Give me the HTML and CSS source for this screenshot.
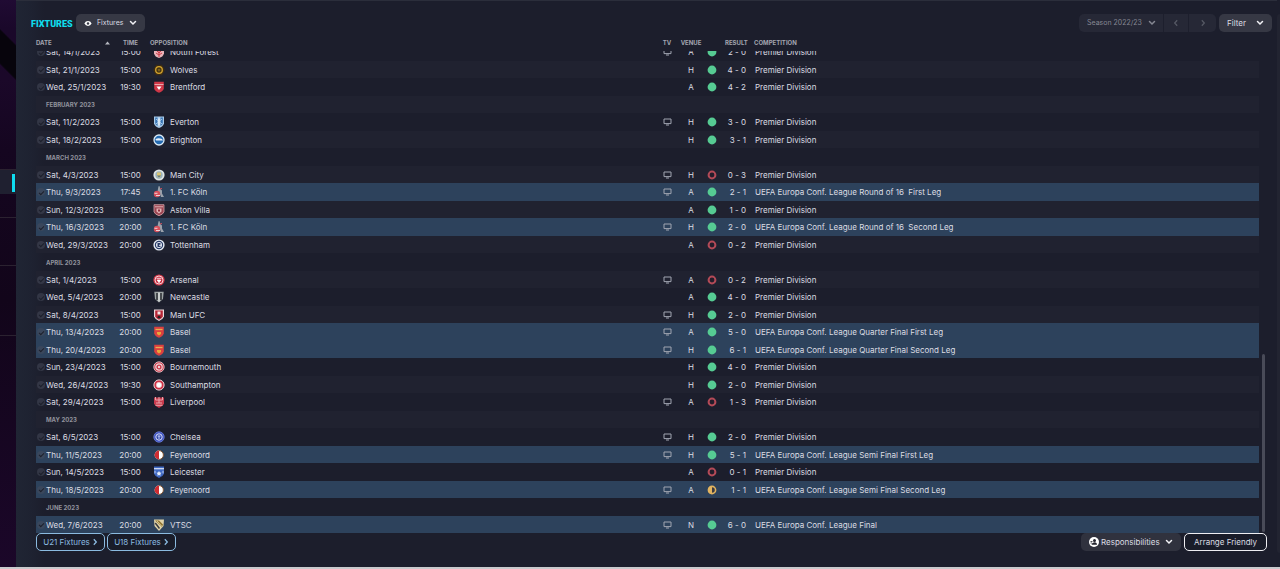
FILE: index.html
```html
<!DOCTYPE html>
<html lang="en">
<head>
<meta charset="utf-8">
<title>Fixtures</title>
<meta name="viewport" content="width=device-width, initial-scale=1">
<link rel="stylesheet" href="styles.css">
</head>
<body>
<svg class="defs" aria-hidden="true">
  <symbol id="tv" viewBox="0 0 9 8"><path d="M1 1h7v4.600H1z" fill="none" stroke="currentColor"/><path d="M3 7h3" stroke="currentColor" fill="none"/></symbol>
  <symbol id="down" viewBox="0 0 8 6"><path d="M1.500 1.500 4 4l2.500-2.500" fill="none" stroke="currentColor" stroke-width="1.500" stroke-linecap="round"/></symbol>
  <symbol id="left" viewBox="0 0 6 8"><path d="M4.200 1.300 1.700 4l2.500 2.700" fill="none" stroke="currentColor" stroke-width="1.300"/></symbol>
  <symbol id="right" viewBox="0 0 6 8"><path d="M1.800 1.300 4.300 4 1.800 6.700" fill="none" stroke="currentColor" stroke-width="1.300"/></symbol>
  <symbol id="win" viewBox="0 0 10 10"><circle cx="5" cy="5" r="4.400" fill="#56cb93"/></symbol>
  <symbol id="loss" viewBox="0 0 10 10"><circle cx="5" cy="5" r="3.400" fill="#241d2b" stroke="#b34a57" stroke-width="2"/></symbol>
  <symbol id="draw" viewBox="0 0 10 10"><circle cx="5" cy="5" r="3.600" fill="#3b3a40" stroke="#e2b460" stroke-width="1.600"/><path d="M5 1a4 4 0 0 0 0 8z" fill="#e2b460"/></symbol>

  <symbol id="forest" viewBox="0 0 12 12"><path d="M1 0h10v7.500Q10 11 6 12 2 11 1 7.500z" fill="#e7b3b8"/><path d="M6 1v10M3 4l3 3 3-3M3 7l3 2 3-2" stroke="#cf3d4b" fill="none"/></symbol>
  <symbol id="wolves" viewBox="0 0 12 12"><path d="M3 .8h6L12 6l-3 5.200H3L0 6z" fill="#3a2b14"/><circle cx="6" cy="6" r="3.300" fill="#473713" stroke="#d4a32d" stroke-width="1.300"/><path d="M4.600 5.200h2.800L6 7.800z" fill="#8e6c22"/></symbol>
  <symbol id="brentford" viewBox="0 0 12 12"><path d="M1.200.800h9.600v7Q10 10.500 6 11.700 2 10.500 1.200 7.800z" fill="#cf3747"/><path d="M1.500 3.500h9" stroke="#e8a7ac"/><path d="M3.500 5.500h5L6 9z" fill="#fff"/></symbol>
  <symbol id="everton" viewBox="0 0 12 12"><path d="M1 .5h10v7Q10 10.500 6 12 2 10.500 1 7.500z" fill="#aacbe9"/><path d="M2.200 1.500h2.300v8.500Q2.500 9 2.200 7zM7.500 1.500h2.300V7Q9.500 9 7.500 10z" fill="#3875b4"/><path d="m3 3 6 5M9 3 3 8" stroke="#aacbe9"/><path d="M5.300 2.500h1.400v7H5.300z" fill="#e8f1f8"/></symbol>
  <symbol id="brighton" viewBox="0 0 12 12"><circle cx="6" cy="6" r="5" fill="#246ab0" stroke="#dbeaf5" stroke-width="1.300"/><path d="M2.500 5q3-1.500 6.500 0l1 1.500H3z" fill="#e7f0fa"/></symbol>
  <symbol id="city" viewBox="0 0 12 12"><circle cx="6" cy="6" r="5.600" fill="#dfe5e4"/><circle cx="6" cy="6" r="3.700" fill="#9ab2bd"/><path d="M4 3.500h4v3.200L6 9 4 6.700z" fill="#d9c472"/><path d="m4 6.500 4 0-2 2z" fill="#597582"/></symbol>
  <symbol id="koln" viewBox="0 0 12 12"><path d="M5.500.3h1.200l.5 2.700L9 4.500v3l2 3.500H8L6.500 7 4.500 5.500z" fill="#9aa1aa"/><circle cx="4" cy="8" r="3.200" fill="#d7505c"/><path d="M1.500 7.300h3M3 9.500h4" stroke="#f0d1d5"/><path d="M7 3 9 2.500" stroke="#d7505c"/></symbol>
  <symbol id="villa" viewBox="0 0 12 12"><path d="M1 .7h10v7.100Q10 10.500 6 11.700 2 10.500 1 7.800z" fill="#9c4552" stroke="#d0a5aa" stroke-width=".8"/><path d="M2 2.800h8" stroke="#e0b4b6"/><path d="M3.500 4.500h5v3L6 9.500 3.500 7.500z" fill="#e0b4b6"/><path d="M5 5.500h2v2H5z" fill="#8c2a3a"/></symbol>
  <symbol id="spurs" viewBox="0 0 12 12"><circle cx="6" cy="6" r="5.600" fill="#e6ebf3"/><circle cx="6" cy="6" r="3.600" fill="#e6ebf3" stroke="#293b67" stroke-width="1.200"/><path d="M4.500 4h3v1.700H6v1L7.500 6.700V8h-3V6.500z" fill="#293b67"/></symbol>
  <symbol id="arsenal" viewBox="0 0 12 12"><circle cx="6" cy="6" r="5.600" fill="#d63b4b"/><circle cx="6" cy="6" r="4" fill="#c72d41" stroke="#f4d3d7"/><path d="M3.500 4.300h5M4.200 6h3.600L6 8.700z" stroke="#fff" fill="#fff" stroke-width=".8"/></symbol>
  <symbol id="newcastle" viewBox="0 0 12 12"><path d="M1.300.8h9.400L10 8 6 11.500 2 8z" fill="#9da3a3"/><path d="M4 2v7M8 2v7" stroke="#171a20" stroke-width="1.300"/><path d="M6 1.500v9" stroke="#e9eceb" stroke-width="1.200"/></symbol>
  <symbol id="united" viewBox="0 0 12 12"><path d="M1 .4h10v7.200Q10 10.500 6 12 2 10.500 1 7.600z" fill="#ead9dc"/><path d="M2.200 1.500h7.600v6Q9 9.500 6 10.700 3 9.500 2.200 7.500z" fill="#b82536"/><path d="M4.500 2.500h3v3h-3z" fill="#f1e5e5"/><path d="M4 8.300 6 6.500l2 1.800L6 9.500z" fill="#222"/></symbol>
  <symbol id="basel" viewBox="0 0 12 12"><path d="M1.200.800h9.600v6.500Q10 10.500 6 11.700 2 10.500 1.200 7.300z" fill="#dc403f"/><path d="M2.500 3.500h7" stroke="#e7b052" stroke-width="1.300"/><path d="M4 6h4v2L6 9.500 4 8z" fill="#e8a73b"/></symbol>
  <symbol id="bournemouth" viewBox="0 0 12 12"><circle cx="6" cy="6" r="5.200" fill="#ca3849" stroke="#f0d6d9" stroke-width=".8"/><circle cx="6" cy="6" r="3.200" fill="none" stroke="#f0d6d9" stroke-width="1.200"/><circle cx="6" cy="6" r="1.200" fill="#f0d6d9"/></symbol>
  <symbol id="southampton" viewBox="0 0 12 12"><circle cx="6" cy="6" r="5.100" fill="#ce3043" stroke="#f0d6d9"/><circle cx="6" cy="6" r="2.700" fill="#fff" stroke="#eec1c6" stroke-width=".7"/></symbol>
  <symbol id="liverpool" viewBox="0 0 12 12"><path d="M1 1.500h10v6.300Q10 10 6 12 2 10 1 7.800z" fill="#c83b4d"/><path d="M2.500 1v3h7V1M6 1v6M3 7h6M2.500 9.300h7" stroke="#e8a5ac" fill="none"/></symbol>
  <symbol id="chelsea" viewBox="0 0 12 12"><circle cx="6" cy="6" r="5.200" fill="#3e52c0" stroke="#6e82dc" stroke-width=".8"/><circle cx="6" cy="6" r="3.200" fill="#3148a9" stroke="#dce0fa"/><path d="M4.600 5h3M6 5v3" stroke="#c9d0ff"/></symbol>
  <symbol id="feyenoord" viewBox="0 0 12 12"><circle cx="6" cy="6" r="4.400" fill="#fff"/><path d="M6 1.600a4.400 4.400 0 0 0 0 8.800z" fill="#cf2d31"/><path d="M6 1.600a4.400 4.400 0 0 1 0 8.800" fill="none" stroke="#8a5a35" stroke-width="1"/></symbol>
  <symbol id="leicester" viewBox="0 0 12 12"><path d="M1 .5h10v7.300Q10 10.500 6 12 2 10.500 1 7.800z" fill="#3f68c2"/><path d="M1 2.700h10" stroke="#d9e3f6" stroke-width="1.200"/><path d="m6 5 .9 1.500 1.600.3-1.100 1.200.2 1.700L6 9l-1.600.7.200-1.700-1.100-1.200 1.600-.3z" fill="#e7eefb"/><path d="M2 4.800v2.500M10 4.800v2.500" stroke="#b9cbee"/></symbol>
  <symbol id="vtsc" viewBox="0 0 12 12"><path d="M1 .5h10L10.500 7 6 12 1.500 7z" fill="#dfd2a8"/><path d="M2 1.500h4l4 4-1 2.500z" fill="#8f7430"/><path d="m2.300 4 4.200 5.500" stroke="#3a3c3d" stroke-width="1.500"/><path d="m4 2 5 5.500" stroke="#e9dcae" stroke-width=".8"/></symbol>
</svg>

<div class="app">
  <nav class="rail" aria-label="Main">
    <span class="rail-item"></span>
    <span class="rail-item rail-item-active"></span>
    <span class="rail-item"></span>
    <span class="rail-item rail-item-tall"></span>
  </nav>

  <main class="panel">
    <header class="toolbar">
      <h1 class="title">FIXTURES</h1>
      <button class="btn btn-view" type="button">
        <svg class="eye" viewBox="0 0 10 8" aria-hidden="true"><path d="M.5 4Q2 1 5 1t4.500 3Q8 7 5 7T.5 4z" fill="#fff"/><circle cx="5" cy="4" r="1.500" fill="#363844"/></svg>
        <span>Fixtures</span>
        <svg class="chev"><use href="#down"/></svg>
      </button>
      <div class="season">
        <label class="season-pick">
          <select class="season-select" aria-label="Season"><option>Season 2022/23</option></select>
          <svg class="chev"><use href="#down"/></svg>
        </label>
        <button class="season-step" type="button" aria-label="Previous season"><svg class="arrow"><use href="#left"/></svg></button>
        <button class="season-step season-next" type="button" aria-label="Next season"><svg class="arrow"><use href="#right"/></svg></button>
      </div>
      <button class="btn btn-filter" type="button"><span>Filter</span><svg class="chev"><use href="#down"/></svg></button>
    </header>

    <div class="list">
      <table class="fixtures">
        <colgroup><col class="c-date"><col class="c-time"><col><col class="c-tv"><col class="c-venue"><col class="c-dot"><col class="c-result"><col></colgroup>
        <thead>
          <tr><th class="th-date">DATE<svg class="sort" viewBox="0 0 5 4" aria-hidden="true"><path d="M0 3.500 2.500.5 5 3.500z" fill="#b5b7c0"/></svg></th><th class="mid">TIME</th><th>OPPOSITION</th><th class="mid">TV</th><th class="mid">VENUE</th><th></th><th class="th-result">RESULT</th><th>COMPETITION</th></tr>
        </thead>
      </table>
      <div class="scroll">
        <table class="fixtures rows">
          <colgroup><col class="c-date"><col class="c-time"><col><col class="c-tv"><col class="c-venue"><col class="c-dot"><col class="c-result"><col></colgroup>
          <tbody>
            <tr><td><label class="date"><input class="pick" type="checkbox">Sat, 14/1/2023</label></td><td>15:00</td><td><span class="club"><svg class="crest"><use href="#forest"/></svg>Nottm Forest</span></td><td><svg class="tv"><use href="#tv"/></svg></td><td>A</td><td><svg class="dot"><use href="#win"/></svg></td><td>2 - 0</td><td>Premier Division</td></tr>
            <tr><td><label class="date"><input class="pick" type="checkbox">Sat, 21/1/2023</label></td><td>15:00</td><td><span class="club"><svg class="crest"><use href="#wolves"/></svg>Wolves</span></td><td></td><td>H</td><td><svg class="dot"><use href="#win"/></svg></td><td>4 - 0</td><td>Premier Division</td></tr>
            <tr><td><label class="date"><input class="pick" type="checkbox">Wed, 25/1/2023</label></td><td>19:30</td><td><span class="club"><svg class="crest"><use href="#brentford"/></svg>Brentford</span></td><td></td><td>A</td><td><svg class="dot"><use href="#win"/></svg></td><td>4 - 2</td><td>Premier Division</td></tr>
            <tr><th class="month" colspan="8">FEBRUARY 2023</th></tr>
            <tr><td><label class="date"><input class="pick" type="checkbox">Sat, 11/2/2023</label></td><td>15:00</td><td><span class="club"><svg class="crest"><use href="#everton"/></svg>Everton</span></td><td><svg class="tv"><use href="#tv"/></svg></td><td>H</td><td><svg class="dot"><use href="#win"/></svg></td><td>3 - 0</td><td>Premier Division</td></tr>
            <tr><td><label class="date"><input class="pick" type="checkbox">Sat, 18/2/2023</label></td><td>15:00</td><td><span class="club"><svg class="crest"><use href="#brighton"/></svg>Brighton</span></td><td></td><td>H</td><td><svg class="dot"><use href="#win"/></svg></td><td>3 - 1</td><td>Premier Division</td></tr>
            <tr><th class="month" colspan="8">MARCH 2023</th></tr>
            <tr><td><label class="date"><input class="pick" type="checkbox">Sat, 4/3/2023</label></td><td>15:00</td><td><span class="club"><svg class="crest"><use href="#city"/></svg>Man City</span></td><td><svg class="tv"><use href="#tv"/></svg></td><td>H</td><td><svg class="dot"><use href="#loss"/></svg></td><td>0 - 3</td><td>Premier Division</td></tr>
            <tr class="euro"><td><label class="date"><input class="pick" type="checkbox">Thu, 9/3/2023</label></td><td>17:45</td><td><span class="club"><svg class="crest"><use href="#koln"/></svg>1. FC Köln</span></td><td><svg class="tv"><use href="#tv"/></svg></td><td>A</td><td><svg class="dot"><use href="#win"/></svg></td><td>2 - 1</td><td>UEFA Europa Conf. League Round of 16&nbsp; First Leg</td></tr>
            <tr><td><label class="date"><input class="pick" type="checkbox">Sun, 12/3/2023</label></td><td>15:00</td><td><span class="club"><svg class="crest"><use href="#villa"/></svg>Aston Villa</span></td><td></td><td>A</td><td><svg class="dot"><use href="#win"/></svg></td><td>1 - 0</td><td>Premier Division</td></tr>
            <tr class="euro"><td><label class="date"><input class="pick" type="checkbox">Thu, 16/3/2023</label></td><td>20:00</td><td><span class="club"><svg class="crest"><use href="#koln"/></svg>1. FC Köln</span></td><td><svg class="tv"><use href="#tv"/></svg></td><td>H</td><td><svg class="dot"><use href="#win"/></svg></td><td>2 - 0</td><td>UEFA Europa Conf. League Round of 16&nbsp; Second Leg</td></tr>
            <tr><td><label class="date"><input class="pick" type="checkbox">Wed, 29/3/2023</label></td><td>20:00</td><td><span class="club"><svg class="crest"><use href="#spurs"/></svg>Tottenham</span></td><td></td><td>A</td><td><svg class="dot"><use href="#loss"/></svg></td><td>0 - 2</td><td>Premier Division</td></tr>
            <tr><th class="month" colspan="8">APRIL 2023</th></tr>
            <tr><td><label class="date"><input class="pick" type="checkbox">Sat, 1/4/2023</label></td><td>15:00</td><td><span class="club"><svg class="crest"><use href="#arsenal"/></svg>Arsenal</span></td><td><svg class="tv"><use href="#tv"/></svg></td><td>A</td><td><svg class="dot"><use href="#loss"/></svg></td><td>0 - 2</td><td>Premier Division</td></tr>
            <tr><td><label class="date"><input class="pick" type="checkbox">Wed, 5/4/2023</label></td><td>20:00</td><td><span class="club"><svg class="crest"><use href="#newcastle"/></svg>Newcastle</span></td><td></td><td>A</td><td><svg class="dot"><use href="#win"/></svg></td><td>4 - 0</td><td>Premier Division</td></tr>
            <tr><td><label class="date"><input class="pick" type="checkbox">Sat, 8/4/2023</label></td><td>15:00</td><td><span class="club"><svg class="crest"><use href="#united"/></svg>Man UFC</span></td><td><svg class="tv"><use href="#tv"/></svg></td><td>H</td><td><svg class="dot"><use href="#win"/></svg></td><td>2 - 0</td><td>Premier Division</td></tr>
            <tr class="euro"><td><label class="date"><input class="pick" type="checkbox">Thu, 13/4/2023</label></td><td>20:00</td><td><span class="club"><svg class="crest"><use href="#basel"/></svg>Basel</span></td><td><svg class="tv"><use href="#tv"/></svg></td><td>A</td><td><svg class="dot"><use href="#win"/></svg></td><td>5 - 0</td><td>UEFA Europa Conf. League Quarter Final First Leg</td></tr>
            <tr class="euro"><td><label class="date"><input class="pick" type="checkbox">Thu, 20/4/2023</label></td><td>20:00</td><td><span class="club"><svg class="crest"><use href="#basel"/></svg>Basel</span></td><td><svg class="tv"><use href="#tv"/></svg></td><td>H</td><td><svg class="dot"><use href="#win"/></svg></td><td>6 - 1</td><td>UEFA Europa Conf. League Quarter Final Second Leg</td></tr>
            <tr><td><label class="date"><input class="pick" type="checkbox">Sun, 23/4/2023</label></td><td>15:00</td><td><span class="club"><svg class="crest"><use href="#bournemouth"/></svg>Bournemouth</span></td><td></td><td>H</td><td><svg class="dot"><use href="#win"/></svg></td><td>4 - 0</td><td>Premier Division</td></tr>
            <tr><td><label class="date"><input class="pick" type="checkbox">Wed, 26/4/2023</label></td><td>19:30</td><td><span class="club"><svg class="crest"><use href="#southampton"/></svg>Southampton</span></td><td></td><td>H</td><td><svg class="dot"><use href="#win"/></svg></td><td>2 - 0</td><td>Premier Division</td></tr>
            <tr><td><label class="date"><input class="pick" type="checkbox">Sat, 29/4/2023</label></td><td>15:00</td><td><span class="club"><svg class="crest"><use href="#liverpool"/></svg>Liverpool</span></td><td><svg class="tv"><use href="#tv"/></svg></td><td>A</td><td><svg class="dot"><use href="#loss"/></svg></td><td>1 - 3</td><td>Premier Division</td></tr>
            <tr><th class="month" colspan="8">MAY 2023</th></tr>
            <tr><td><label class="date"><input class="pick" type="checkbox">Sat, 6/5/2023</label></td><td>15:00</td><td><span class="club"><svg class="crest"><use href="#chelsea"/></svg>Chelsea</span></td><td><svg class="tv"><use href="#tv"/></svg></td><td>H</td><td><svg class="dot"><use href="#win"/></svg></td><td>2 - 0</td><td>Premier Division</td></tr>
            <tr class="euro"><td><label class="date"><input class="pick" type="checkbox">Thu, 11/5/2023</label></td><td>20:00</td><td><span class="club"><svg class="crest"><use href="#feyenoord"/></svg>Feyenoord</span></td><td><svg class="tv"><use href="#tv"/></svg></td><td>H</td><td><svg class="dot"><use href="#win"/></svg></td><td>5 - 1</td><td>UEFA Europa Conf. League Semi Final First Leg</td></tr>
            <tr><td><label class="date"><input class="pick" type="checkbox">Sun, 14/5/2023</label></td><td>15:00</td><td><span class="club"><svg class="crest"><use href="#leicester"/></svg>Leicester</span></td><td></td><td>A</td><td><svg class="dot"><use href="#loss"/></svg></td><td>0 - 1</td><td>Premier Division</td></tr>
            <tr class="euro"><td><label class="date"><input class="pick" type="checkbox">Thu, 18/5/2023</label></td><td>20:00</td><td><span class="club"><svg class="crest"><use href="#feyenoord"/></svg>Feyenoord</span></td><td><svg class="tv"><use href="#tv"/></svg></td><td>A</td><td><svg class="dot"><use href="#draw"/></svg></td><td>1 - 1</td><td>UEFA Europa Conf. League Semi Final Second Leg</td></tr>
            <tr><th class="month" colspan="8">JUNE 2023</th></tr>
            <tr class="euro"><td><label class="date"><input class="pick" type="checkbox">Wed, 7/6/2023</label></td><td>20:00</td><td><span class="club"><svg class="crest"><use href="#vtsc"/></svg>VTSC</span></td><td><svg class="tv"><use href="#tv"/></svg></td><td>N</td><td><svg class="dot"><use href="#win"/></svg></td><td>6 - 0</td><td>UEFA Europa Conf. League Final</td></tr>
          </tbody>
        </table>
        <div class="track"><div class="thumb"></div></div>
      </div>
    </div>

    <footer class="actions">
      <button class="btn btn-outline btn-blue" type="button">U21 Fixtures<svg class="arrow"><use href="#right"/></svg></button>
      <button class="btn btn-outline btn-blue" type="button">U18 Fixtures<svg class="arrow"><use href="#right"/></svg></button>
      <button class="btn btn-resp" type="button">
        <svg class="person" viewBox="0 0 10 10" aria-hidden="true"><circle cx="5" cy="5" r="5" fill="#fff"/><circle cx="5.500" cy="3.600" r="1.500" fill="#22232d"/><path d="M2.500 7.800q.5-2.500 3-2.500t2.500 2.500z" fill="#22232d"/><path d="M1.500 4.500h2M1.500 6h1.500" stroke="#22232d" stroke-width=".8"/></svg>
        <span>Responsibilities</span>
        <svg class="chev"><use href="#down"/></svg>
      </button>
      <button class="btn btn-outline btn-white" type="button">Arrange Friendly</button>
    </footer>
  </main>
  <aside class="edge"></aside>
</div>
</body>
</html>
```
FILE: styles.css
```css
* { box-sizing: border-box; }

body {
  margin: 0;
  background: #1c1e2c;
  color: #dcdde3;
  font: 8px/10px Inter, Roboto, sans-serif;
}

svg { display: block; flex: none; }
button, select { font: inherit; color: inherit; }
.defs { position: absolute; width: 0; height: 0; }

.app {
  display: grid;
  grid-template-columns: 16px minmax(0, 1fr) 3px;
  min-height: 100vh;
  border-bottom: 2px solid #c9cacd;
}

/* Navigation rail */
.rail {
  padding-top: 24px;
  background:
    linear-gradient(45deg, transparent 21%, #07040c 24% 69%, transparent 72%) 0 24px / 100% 56px no-repeat,
    linear-gradient(180deg, #200b33 0, #1a082a 28px, #1b0829 80px, #150620 150px, #12051a 300px, #1b0729 100%);
}
.rail-item { display: block; height: 48px; border-bottom: 1px solid #2b2230; }
.rail-item:first-child { height: 146px; }
.rail-item-active { background: linear-gradient(#1f2030, #1f2030) 0 0 / 100% 24px no-repeat; position: relative; }
.rail-item-active::after { content: ""; position: absolute; right: 1px; top: 4px; width: 3px; height: 18px; background: #0fdcf0; }
.rail-item-tall { height: 70px; }

/* Panel */
.panel {
  padding: 14px 5px 14px 20px;
  border-top: 1px solid #2b2e3b;
  background: linear-gradient(90deg, #202534 0, #1e2231 16px, #1c1e2c 28px);
}
.edge { margin-top: 14px; margin-bottom: 14px; background: #222431; border-radius: 3px 0 0 3px; }

.toolbar { display: flex; align-items: center; height: 18px; margin: -1px 0 4px -5px; }
.title { margin: 0 3px 0 0; padding-top: 2px; font-family: Roboto, sans-serif; font-size: 9px; font-weight: 900; color: #0fdcec; }

.btn {
  display: flex;
  align-items: center;
  height: 18px;
  padding: 0 8px;
  border: 0;
  border-radius: 5px;
  background: #363844;
  white-space: nowrap;
}
.chev { width: 8px; height: 6px; color: #f2f2f5; }
.arrow { width: 6px; height: 8px; }
.eye { width: 8px; height: 7px; }
.btn-view { width: 69px; font-size: 7px; justify-content: space-between; }
.btn-filter { width: 53px; margin-left: 3px; justify-content: space-between; }

.season { display: flex; margin-left: auto; height: 18px; border-radius: 5px; background: #262836; color: #858792; font-size: 7px; }
.season-pick { display: flex; align-items: center; width: 85px; padding: 0 7px 0 8px; border-right: 1px solid #1d1f2d; }
.season-select { flex: 1; min-width: 0; padding: 0; border: 0; background: none; appearance: none; }
.season .chev { color: #858792; }
.season-step { display: grid; place-items: center; width: 25px; padding: 0; border: 0; border-right: 1px solid #1d1f2d; background: none; color: #555864; }
.season-next { border-right: 0; width: 27px; }

/* Fixture list */
.list { padding-right: 13px; }
.fixtures { width: 100%; table-layout: fixed; border-collapse: collapse; white-space: nowrap; }
.fixtures th, .fixtures td { padding: 0; text-align: left; font-weight: 400; }
.fixtures thead th { height: 15px; padding-bottom: 2px; font-size: 6px; font-weight: 700; color: #a3a5b0; }
.fixtures .mid { text-align: center; }
.fixtures .th-result { padding-left: 5px; }
.c-date { width: 75px; }
.c-time { width: 39px; }
.c-tv, .c-venue { width: 24px; }
.c-dot { width: 17px; }
.c-result { width: 34px; }
.sort { display: inline-block; width: 5px; height: 4px; margin-left: 53px; }

.scroll { display: grid; grid-template-columns: minmax(0, 1fr) 0; overflow-y: clip; }
.rows { margin-top: -8px; }
.rows tr { height: 17px; }
.rows tr:nth-child(odd) { height: 18px; }
.rows tr:nth-child(even) { background: #202230; }
.rows .euro, .rows .euro:nth-child(even) { background: #2d425c; }
.rows td:nth-child(2), .rows td:nth-child(4), .rows td:nth-child(5) { text-align: center; }
.rows td:nth-child(7) { text-align: right; padding-right: 8px; }
.rows td:nth-child(8) { padding-left: 1px; }
.rows .month { padding: 1px 0 0 10px; font-size: 6px; font-weight: 700; color: #90929c; }

.date { display: flex; align-items: center; gap: 1px; padding-left: 1px; }
.pick {
  display: grid;
  place-items: center;
  appearance: none;
  flex: none;
  width: 8px;
  height: 8px;
  margin: 0;
  border-radius: 50%;
  background: rgba(72, 76, 92, .5);
}
.pick::after { content: ""; width: 4px; height: 2px; border: solid #1d202c; border-width: 0 0 1px 1px; transform: rotate(-45deg); }
.club { display: flex; align-items: center; gap: 5px; padding-left: 3px; }
.crest { width: 12px; height: 12px; }
.tv { width: 9px; height: 8px; margin: 0 auto; color: #a1a5b1; }
.dot { width: 10px; height: 10px; margin: 0 auto; }

.track { display: flex; flex-direction: column; justify-content: flex-end; width: 3px; margin-left: 3px; padding-bottom: 1px; }
.thumb { height: 37%; border-radius: 2px; background: #494b58; }

/* Footer */
.actions { display: flex; gap: 2px; margin-right: 5px; }
.btn-outline { border: 1px solid; background: #191c29; }
.btn-blue { width: 69px; padding: 0 4px; justify-content: center; gap: 2px; border-color: #8bbbe0; color: #8bbbe0; }
.btn-resp { width: 100px; margin-left: auto; gap: 2px; background: #30323e; }
.btn-resp .chev { margin-left: auto; }
.person { width: 10px; height: 10px; }
.btn-white { width: 83px; margin-left: 1px; justify-content: center; border-color: #eeeef2; }
```
